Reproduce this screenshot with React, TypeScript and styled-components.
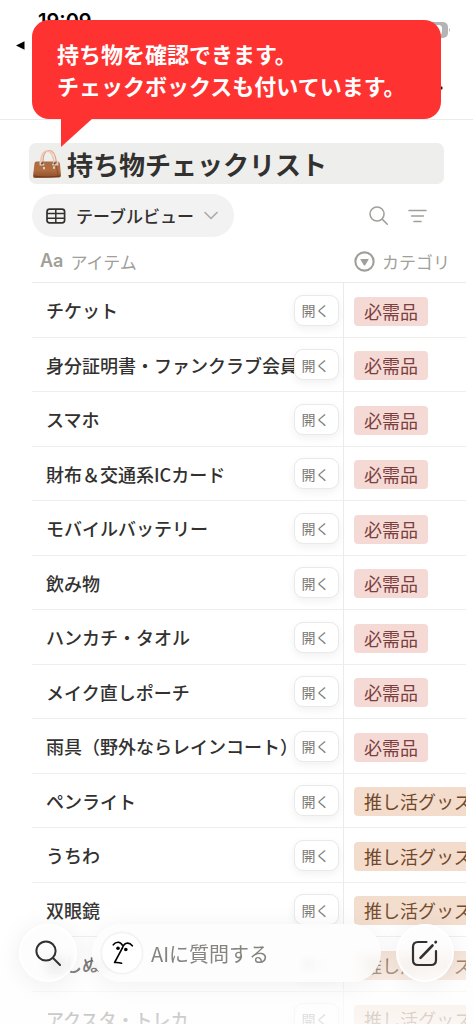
import React from "react";
import styled, { createGlobalStyle } from "styled-components";

const GlobalStyle = createGlobalStyle`
  *, *::before, *::after { box-sizing: border-box; }
  body {
    margin: 0;
    background: #fff;
    color: #32312f;
    font-family: "Noto Sans CJK JP", "Noto Sans", sans-serif;
  }
  button, input { font-family: inherit; }
`;

const Screen = styled.div`
  position: relative;
  height: 100vh;
  overflow: hidden;
`;

const Header = styled.header`
  height: 120px;
  padding: 9px 22px 0 16px;
  border-bottom: 1px solid #ebebea;
`;

const StatusRow = styled.div`
  display: flex;
  justify-content: space-between;
  align-items: flex-start;
  height: 26px;
  padding-left: 22px;
`;

const Clock = styled.time`
  font: 600 20px/24px Inter, sans-serif;
  color: #000;
`;

const BatteryBox = styled.span`
  display: flex;
  padding-top: 13px;
`;

const NavRow = styled.div`
  display: flex;
  justify-content: space-between;
  height: 60px;
`;

const IconButton = styled.button`
  display: flex;
  align-items: center;
  justify-content: center;
  padding: 0;
  border: 0;
  background: none;
  color: #a09f9a;
`;

const BackButton = styled(IconButton)`
  height: 20px;
  color: #000;
`;

const MoreButton = styled(IconButton)`
  align-self: flex-end;
  height: 14px;
  margin-right: 8px;
  color: #222;
`;

const Callout = styled.aside`
  position: absolute;
  z-index: 3;
  top: 20px;
  left: 32px;
  right: 32px;
  height: 99px;
  padding: 17px 0 0 25px;
  border-radius: 17px;
  background: #ff3232;
  color: #fff;
  font-size: 22px;
  font-weight: 700;
  line-height: 32px;
  white-space: nowrap;

  p { margin: 0; }
`;

const CalloutTail = styled.svg`
  position: absolute;
  top: 98px;
  left: 29px;
`;

const Title = styled.h1`
  display: flex;
  align-items: center;
  gap: 5px;
  height: 41px;
  margin: 23px 29px 10px;
  padding-left: 3px;
  border-radius: 7px;
  background: #eeeeec;
  font-size: 26px;
  font-weight: 700;
  line-height: 40px;
  white-space: nowrap;
`;

const Toolbar = styled.div`
  display: flex;
  align-items: center;
  gap: 20px;
  height: 43px;
  padding: 0 46px 0 32px;
`;

const ViewButton = styled.button`
  display: flex;
  align-items: center;
  gap: 10px;
  height: 43px;
  margin-right: auto;
  padding: 0 16px 0 14px;
  border: 0;
  border-radius: 22px;
  background: #f2f2f2;
  color: #32312f;
  font-size: 17px;
  font-weight: 500;
`;

const TableFrame = styled.div`
  margin: 0 7px 0 32px;
  overflow: hidden;
`;

const Table = styled.table`
  width: 100%;
  table-layout: fixed;
  border-collapse: separate;
  border-spacing: 0;
`;

const HeadCell = styled.th<{ $wide?: boolean }>`
  width: ${(p) => (p.$wide ? "312px" : "auto")};
  height: 46px;
  padding: 3px 0 0 ${(p) => (p.$wide ? "8px" : "10px")};
  border-bottom: 1px solid #ebebe9;
  color: #a09f9a;
  font-size: 17px;
  font-weight: 400;
  text-align: left;
`;

const HeadLabel = styled.div`
  display: flex;
  align-items: center;
  gap: 7px;
  white-space: nowrap;
`;

const TypeMark = styled.span`
  font: 600 18px/24px Inter, sans-serif;
`;

const Row = styled.tr`
  height: 54px;
  &:nth-child(odd) { height: 55px; }
`;

const Cell = styled.td<{ $name?: boolean }>`
  padding: ${(p) => (p.$name ? "0 4px 0 14px" : "2px 0 0 10px")};
  border-bottom: 1px solid #eeeeec;
  border-right: ${(p) => (p.$name ? "1px solid #ebebe9" : "0")};
  white-space: nowrap;
`;

const NameLine = styled.div`
  display: flex;
  align-items: center;
`;

const ItemName = styled.span`
  flex: 1;
  min-width: 0;
  overflow: hidden;
  font-size: 18px;
  font-weight: 500;
  line-height: 28px;
`;

const OpenButton = styled.button`
  width: 45px;
  height: 31px;
  padding: 0 2px 0 0;
  border: 1px solid #e9e9e7;
  border-radius: 9px;
  background: #fff;
  box-shadow: 0 3px 8px rgba(0, 0, 0, 0.06);
  color: #7b7a75;
  font-size: 14px;
  line-height: 20px;
`;

const Tag = styled.span<{ $tone: Tone }>`
  display: inline-block;
  height: 29px;
  padding: 0 10px;
  border-radius: 4px;
  background: ${(p) => (p.$tone === "red" ? "#f5d9d5" : "#f3dccc")};
  color: ${(p) => (p.$tone === "red" ? "#7a403e" : "#70472a")};
  font-size: 18px;
  line-height: 28px;
  vertical-align: middle;
`;

const Fade = styled.div`
  position: absolute;
  z-index: 1;
  left: 0;
  right: 0;
  bottom: 0;
  height: 144px;
  background: linear-gradient(rgba(253, 253, 253, 0), rgba(253, 253, 253, 0.05) 35%, rgba(253, 253, 253, 0.7) 88%, rgba(253, 253, 253, 0.8));
  pointer-events: none;
`;

const BottomBar = styled.footer`
  position: absolute;
  z-index: 2;
  left: 0;
  right: 0;
  bottom: 42px;
  display: flex;
  gap: 15px;
  padding: 0 19px;
`;

const RoundButton = styled.button`
  display: flex;
  align-items: center;
  justify-content: center;
  flex: none;
  width: 58px;
  height: 58px;
  padding: 0;
  border: 2px solid rgba(255, 255, 255, 0.8);
  border-radius: 50%;
  background: rgba(253, 253, 253, 0.78);
  backdrop-filter: blur(6px);
  box-shadow: 0 2px 24px rgba(0, 0, 0, 0.07);
  color: #32312f;
`;

const AskBox = styled.label`
  display: flex;
  align-items: center;
  flex: 1;
  min-width: 0;
  gap: 9px;
  height: 58px;
  padding: 0 10px;
  border-radius: 29px;
  background: rgba(253, 253, 253, 0.88);
  backdrop-filter: blur(3px);
  box-shadow: 0 2px 24px rgba(0, 0, 0, 0.06);
`;

const Face = styled.span`
  display: flex;
  flex: none;
  width: 40px;
  height: 40px;
  border-radius: 50%;
  background: #fff;
  box-shadow: 0 0 3px rgba(0, 0, 0, 0.14);
`;

const AskInput = styled.input`
  flex: 1;
  min-width: 0;
  height: 32px;
  padding: 0;
  border: 0;
  outline: 0;
  background: none;
  color: #32312f;
  font-size: 20px;

  &::placeholder { color: #85847f; opacity: 1; }
`;

type Tone = "red" | "orange";

const CATEGORY: Record<Tone, string> = {
  red: "必需品",
  orange: "推し活グッズ",
};

const ITEMS: { name: string; tone: Tone }[] = [
  { name: "チケット", tone: "red" },
  { name: "身分証明書・ファンクラブ会員証", tone: "red" },
  { name: "スマホ", tone: "red" },
  { name: "財布＆交通系ICカード", tone: "red" },
  { name: "モバイルバッテリー", tone: "red" },
  { name: "飲み物", tone: "red" },
  { name: "ハンカチ・タオル", tone: "red" },
  { name: "メイク直しポーチ", tone: "red" },
  { name: "雨具（野外ならレインコート）", tone: "red" },
  { name: "ペンライト", tone: "orange" },
  { name: "うちわ", tone: "orange" },
  { name: "双眼鏡", tone: "orange" },
  { name: "推しぬい", tone: "orange" },
  { name: "アクスタ・トレカ", tone: "orange" },
];

const Battery = () => (
  <svg width="32" height="16" viewBox="0 0 32 16" aria-hidden="true">
    <rect width="29" height="16" rx="5" fill="#b4b4b4" />
    <path d="M30 6q2 2 0 4z" fill="#b4b4b4" />
    <rect x="16" y="3" width="7" height="10" rx="3.5" fill="#fff" />
  </svg>
);

const Bag = () => (
  <svg width="30" height="30" viewBox="0 0 30 30" aria-hidden="true">
    <defs>
      <linearGradient id="leather" x1="0" y1="0" x2="0" y2="1">
        <stop offset="0" stopColor="#ad6b43" />
        <stop offset="0.5" stopColor="#b26e40" />
        <stop offset="1" stopColor="#8a4e2b" />
      </linearGradient>
    </defs>
    <path d="M11 13C11 4 14 1.500 17.500 1.500s6 4 7 12" fill="none" stroke="#d8a58a" strokeWidth="1.200" />
    <path d="M4.500 12.500h21q2 0 2.400 2l1.100 12q0 2-2 2l-24 .6q-2 0-2-2l1.500-12.600q.2-2 2-2z" fill="url(#leather)" />
    <path d="M24 13l2.200 15" stroke="#8a4b29" strokeWidth="0.8" />
    <path d="M2 27q13 2 26 0" fill="none" stroke="#6f3a20" strokeWidth="1.200" />
    <path d="M8.500 15.500C9 6 11 2 15 2s6.500 4 7 13" fill="none" stroke="#efc6ae" strokeWidth="1.700" />
    <path d="M8.500 13v2.500h3M25.500 13v2.500h-4.500" fill="none" stroke="#d9d0c8" strokeWidth="1.800" strokeLinecap="round" />
    <circle cx="10" cy="14.500" r="1" fill="#5d4438" />
    <circle cx="22.500" cy="14.500" r="1" fill="#5d4438" />
    <path d="M12 18.500v1.200M22 18v1.200" stroke="#f5e8d8" strokeWidth="1.600" strokeLinecap="round" />
  </svg>
);

const TableIcon = () => (
  <svg width="20" height="16" viewBox="0 0 20 16" fill="none" stroke="currentColor" aria-hidden="true">
    <rect x="1" y="1.200" width="17.600" height="13.600" rx="2.600" strokeWidth="1.700" />
    <path d="M1 5.600h17.600M1 10.300h17.600M9.800 1v14" strokeWidth="1.500" />
  </svg>
);

const Chevron = () => (
  <svg width="14" height="9" viewBox="0 0 14 9" fill="none" stroke="#aaa9a4" strokeWidth="1.600" strokeLinecap="round" strokeLinejoin="round" aria-hidden="true">
    <path d="M1 1.500l6 6 6-6" />
  </svg>
);

const SearchIcon = ({ size, weight }: { size: number; weight: number }) => (
  <svg width={size} height={size} viewBox="0 0 26 26" fill="none" stroke="currentColor" strokeWidth={weight} strokeLinecap="round" aria-hidden="true">
    <circle cx="11" cy="11" r="9.600" />
    <path d="M18 18l7 7" />
  </svg>
);

const FilterIcon = () => (
  <svg width="19" height="14" viewBox="0 0 19 14" stroke="currentColor" strokeWidth="1.600" strokeLinecap="round" aria-hidden="true">
    <path d="M1 1.500h17M3.600 7h11.800M6 12.500h7" />
  </svg>
);

const SelectIcon = () => (
  <svg width="21" height="21" viewBox="0 0 20 20" aria-hidden="true">
    <circle cx="10" cy="10" r="8.700" fill="none" stroke="#a09f9a" strokeWidth="2" />
    <path d="M6.600 7.600h6.800q.8 0 .4.700l-3.200 5.300q-.6.800-1.200 0L6.200 8.300q-.4-.7.400-.7z" fill="#a09f9a" />
  </svg>
);

const FaceDrawing = () => (
  <svg width="40" height="40" viewBox="0 0 40 40" fill="none" stroke="#000" strokeWidth="1.600" strokeLinecap="round" strokeLinejoin="round" aria-hidden="true">
    <path d="M11.300 11.800C14 8.300 18.500 8.300 20.300 12.200" />
    <path d="M20.300 15.200C22 9.200 27 8.600 30.300 12.800" />
    <path d="M20.300 15.200L12.600 29.500q4-.3 7 .7" />
    <circle cx="16" cy="15.200" r="1.800" fill="#000" stroke="none" />
    <circle cx="23.800" cy="16.500" r="1.800" fill="#000" stroke="none" />
  </svg>
);

const ComposeIcon = () => (
  <svg width="28" height="28" viewBox="0 0 28 28" fill="none" stroke="currentColor" strokeWidth="2.200" strokeLinecap="round" aria-hidden="true">
    <path d="M15.500 3H7q-5 0-5 5v13q0 5 5 5h13q5 0 5-5v-9" />
    <path d="M9.500 18.800L21.500 6.500" strokeWidth="2.600" />
    <path d="M24.600 3.300l.2-.2" strokeWidth="2.800" />
  </svg>
);

export default function App() {
  return (
    <Screen>
      <GlobalStyle />
      <Header>
        <StatusRow>
          <Clock>19:09</Clock>
          <BatteryBox>
            <Battery />
          </BatteryBox>
        </StatusRow>
        <NavRow>
          <BackButton aria-label="戻る">
            <svg width="9" height="9" viewBox="0 0 9 9" aria-hidden="true">
              <path d="M8.500.3v8.400L0 4.500z" fill="currentColor" />
            </svg>
          </BackButton>
          <MoreButton aria-label="その他">
            <svg width="20" height="4" viewBox="0 0 20 4" fill="currentColor" aria-hidden="true">
              <circle cx="2" cy="2" r="1.700" />
              <circle cx="10" cy="2" r="1.700" />
              <circle cx="18" cy="2" r="1.700" />
            </svg>
          </MoreButton>
        </NavRow>
      </Header>

      <Callout>
        <p>持ち物を確認できます。</p>
        <p>チェックボックスも付いています。</p>
        <CalloutTail width="32" height="30" viewBox="0 0 32 30" aria-hidden="true">
          <path d="M0 0h32L0 29z" fill="#ff3232" />
        </CalloutTail>
      </Callout>

      <main>
        <Title>
          <Bag />
          持ち物チェックリスト
        </Title>
        <Toolbar>
          <ViewButton>
            <TableIcon />
            テーブルビュー
            <Chevron />
          </ViewButton>
          <IconButton aria-label="検索">
            <SearchIcon size={19} weight={2.1} />
          </IconButton>
          <IconButton aria-label="フィルター">
            <FilterIcon />
          </IconButton>
        </Toolbar>
        <TableFrame>
          <Table>
            <thead>
              <tr>
                <HeadCell $wide scope="col">
                  <HeadLabel>
                    <TypeMark aria-hidden="true">Aa</TypeMark>
                    アイテム
                  </HeadLabel>
                </HeadCell>
                <HeadCell scope="col">
                  <HeadLabel>
                    <SelectIcon />
                    カテゴリ
                  </HeadLabel>
                </HeadCell>
              </tr>
            </thead>
            <tbody>
              {ITEMS.map((item) => (
                <Row key={item.name}>
                  <Cell $name>
                    <NameLine>
                      <ItemName>{item.name}</ItemName>
                      <OpenButton>開く</OpenButton>
                    </NameLine>
                  </Cell>
                  <Cell>
                    <Tag $tone={item.tone}>{CATEGORY[item.tone]}</Tag>
                  </Cell>
                </Row>
              ))}
            </tbody>
          </Table>
        </TableFrame>
      </main>

      <Fade />
      <BottomBar>
        <RoundButton aria-label="検索">
          <SearchIcon size={26} weight={2} />
        </RoundButton>
        <AskBox>
          <Face>
            <FaceDrawing />
          </Face>
          <AskInput type="text" placeholder="AIに質問する" aria-label="AIに質問する" />
        </AskBox>
        <RoundButton aria-label="新規作成">
          <ComposeIcon />
        </RoundButton>
      </BottomBar>
    </Screen>
  );
}
